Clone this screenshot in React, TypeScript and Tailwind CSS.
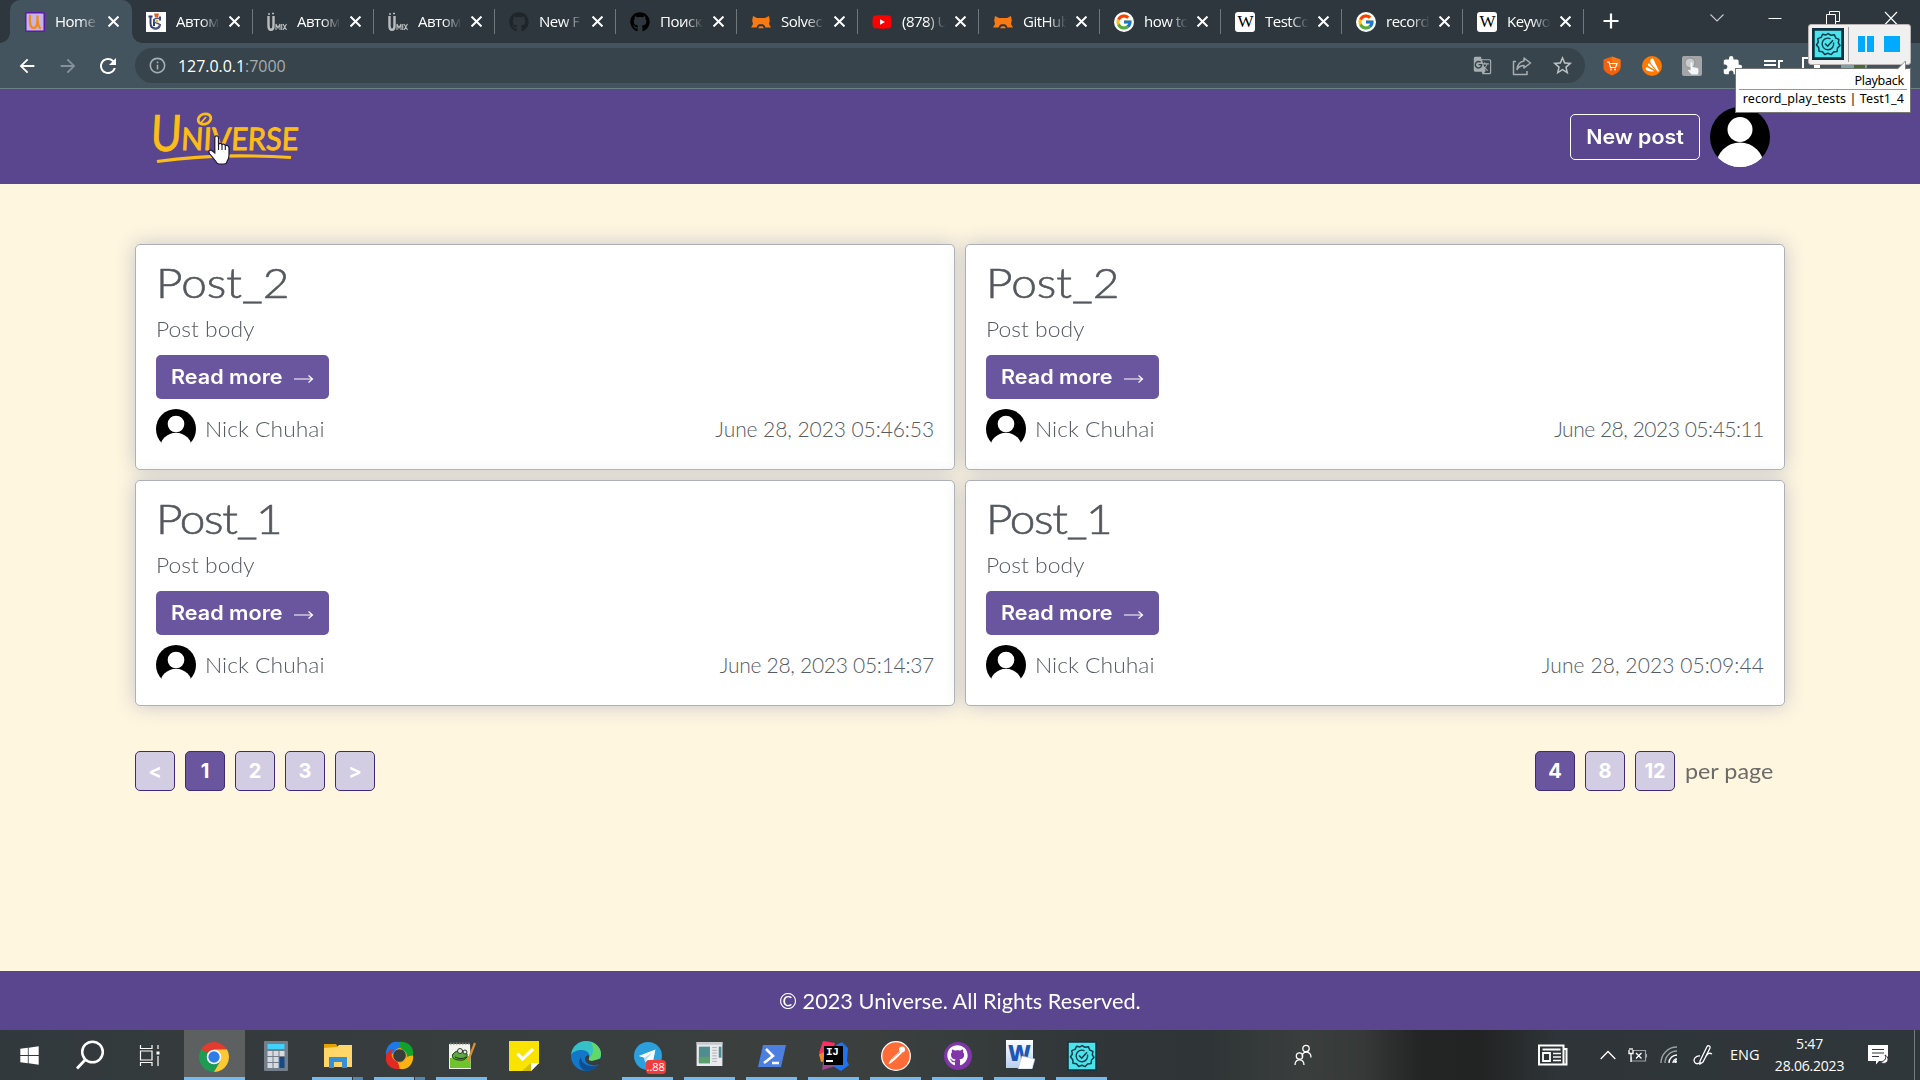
import type { ReactNode } from 'react';
import { FaGithub, FaWindows, FaYoutube } from 'react-icons/fa';
import { FcGoogle } from 'react-icons/fc';
import {
  MdArrowBack,
  MdArrowForward,
  MdExtension,
  MdGTranslate,
  MdInfoOutline,
  MdOutlineStarBorder,
  MdQueueMusic,
  MdRefresh,
} from 'react-icons/md';

/* ---------- favicons ---------- */

const UniverseIcon = () => (
  <svg viewBox="0 0 20 20" className="size-5">
    <rect x=".75" y=".75" width="18.5" height="18.5" rx="1" fill="#c8b4e6" stroke="#5a17a8" strokeWidth="1.5" />
    <path d="M5 3.500c0 5-1 12 3.500 12.500 4 .3 4-6 4-12.500 0 6 .2 10 2.500 12.500" fill="none" stroke="#f08a1c" strokeWidth="2.200" strokeLinecap="round" />
  </svg>
);

const CrestIcon = () => (
  <svg viewBox="0 0 20 20" className="size-5">
    <rect width="20" height="20" fill="#fff" />
    <path d="M2.500 4.500h4M4.500 5v6c0 7 9 7 9.500 1M8 7v7M14 4.500v4" fill="none" stroke="#2e4077" strokeWidth="2" />
    <path d="M15 7c-5-2-8 0-7 2.500s6 1 6 4-4 4-7 3" fill="none" stroke="#4a5a8c" strokeWidth="1.500" />
    <path d="M8 1.500h5l-1 4H9z" fill="#e2622c" />
    <circle cx="11" cy="9" r="1.600" fill="#e9b93c" />
  </svg>
);

const MixIcon = () => (
  <svg viewBox="0 0 20 20" className="size-5">
    <g fill="none" stroke="#b9bdbf">
      <path d="M1.500 4v10c0 5 5 5 5 0V4" strokeWidth="2.400" />
      <path d="M1 2h2M5 1.500h2" strokeWidth="1.500" />
      <path d="M9 18v-6l2 4 2-4v6M14.700 12v6M16 12l3.500 6M19.500 12L16 18" strokeWidth="1.100" />
    </g>
  </svg>
);

const CatIcon = () => (
  <svg viewBox="0 0 20 20" className="size-5">
    <path d="M2 4l4 2h8l4-2 .8 4.500-.8 3.500 2 3.500h-5.500l-1-2-1.500-1.200H8L6.500 13.500l-1 2H0L2 12l-.8-3.500z" fill="#f97a12" />
    <path d="M7 16.200l1.500-2h3l1.500 2z" fill="#f97a12" />
  </svg>
);

const WikiIcon = () => (
  <span className="flex size-5 items-center justify-center rounded-[3px] bg-white font-['Liberation_Serif',serif] text-[17px] leading-none tracking-tighter text-black">W</span>
);

const GoogleIcon = () => (
  <span className="flex size-5 items-center justify-center rounded-full bg-white">
    <FcGoogle size={18} />
  </span>
);

const YouTubeIcon = () => (
  <span className="relative flex size-5 items-center justify-center">
    <span className="absolute h-2 w-2 bg-white" />
    <FaYoutube size={20} className="relative text-[#f00]" />
  </span>
);

const tabs: { title: string; icon: ReactNode }[] = [
  { title: 'Home', icon: <UniverseIcon /> },
  { title: 'Автом', icon: <CrestIcon /> },
  { title: 'Автом', icon: <MixIcon /> },
  { title: 'Автом', icon: <MixIcon /> },
  { title: 'New F', icon: <FaGithub size={20} className="text-[#1f262b]" /> },
  { title: 'Поиск', icon: <FaGithub size={20} className="text-black" /> },
  { title: 'Solvec', icon: <CatIcon /> },
  { title: '(878) U', icon: <YouTubeIcon /> },
  { title: 'GitHub', icon: <CatIcon /> },
  { title: 'how to', icon: <GoogleIcon /> },
  { title: 'TestCo', icon: <WikiIcon /> },
  { title: 'record', icon: <GoogleIcon /> },
  { title: 'Keywo', icon: <WikiIcon /> },
];

const Cross = ({ className }: { className: string }) => (
  <svg viewBox="0 0 10 10" className={className}>
    <path d="M0.500 0.500l9 9M9.500 0.500l-9 9" stroke="currentColor" strokeWidth="1.800" />
  </svg>
);

function TabStrip() {
  return (
    <div className="flex h-[43px] bg-[#2d373d] pl-[10px]">
      {tabs.map((tab, i) => (
        <div
          key={i}
          className={
            i === 0
              ? 'relative flex w-[122px] shrink-0 items-center rounded-t-[10px] bg-[#44545e] pl-[15px]'
              : 'relative flex w-[121px] shrink-0 items-center pl-[14px]'
          }
        >
          {tab.icon}
          <span className="ml-[10px] w-[45px] overflow-hidden text-[15px] tracking-[-0.5px] whitespace-nowrap text-white [mask-image:linear-gradient(to_right,black_55%,transparent_97%)]">
            {tab.title}
          </span>
          <Cross className="ml-[8px] size-[11px] text-white" />
          {i > 0 && <span className="ml-auto h-[25px] w-px bg-[#6d777c]" />}
          {i === 0 && (
            <>
              <span className="absolute bottom-0 -left-[10px] size-[10px] bg-[radial-gradient(circle_at_top_left,transparent_9.5px,#44545e_10px)]" />
              <span className="absolute -right-[10px] bottom-0 size-[10px] bg-[radial-gradient(circle_at_top_right,transparent_9.5px,#44545e_10px)]" />
            </>
          )}
        </div>
      ))}
      <svg viewBox="0 0 16 16" className="mt-[13px] ml-[19px] size-4 shrink-0">
        <path d="M8 .5v15M.5 8h15" stroke="#fff" strokeWidth="2.200" />
      </svg>
      <div className="mt-[11px] ml-auto mr-[22px] flex gap-[44px] text-white">
        <svg viewBox="0 0 14 14" className="size-[14px]"><path d="M.5 3.500l6.500 6.500L13.500 3.500" fill="none" stroke="#c8cdd0" strokeWidth="1.100" /></svg>
        <svg viewBox="0 0 14 14" className="size-[14px]"><path d="M.5 7.500h13" stroke="#fff" /></svg>
        <svg viewBox="0 0 14 14" className="size-[14px]"><path d="M.5 3.500h9v10h-9zM3.500 3V.5h10v10H10" fill="none" stroke="#fff" /></svg>
        <svg viewBox="0 0 14 14" className="size-[14px]"><path d="M1 1l12 12.500M13 1L1 13.500" stroke="#fff" strokeWidth="1.100" /></svg>
      </div>
    </div>
  );
}

function AddressBar() {
  return (
    <div className="flex h-[46px] items-center border-b border-[#6b8081] bg-[#44545e] pl-[16px]">
      <MdArrowBack size={22} className="text-white" />
      <MdArrowForward size={22} className="ml-[19px] text-[#85929a]" />
      <MdRefresh size={24} className="ml-[17px] text-white" />
      <div className="ml-[15px] flex h-[35px] w-[1450px] shrink-0 items-center rounded-full bg-[#38444b] pl-[13px]">
        <MdInfoOutline size={19} className="text-[#a5b0b5]" />
        <span className="ml-[11px] text-base tracking-[-0.05px] text-white">
          127.0.0.1<span className="text-[#a5adb1]">:7000</span>
        </span>
        <MdGTranslate size={19} className="ml-auto text-[#a5adb1]" />
        <svg viewBox="0 0 20 20" className="ml-[20px] size-5">
          <path d="M4 5.500H1.500v13h13.500V15M12 2l6.500 5-6.500 5V9.500C9 9.500 6.500 11 5 13.500 5.500 9 8 5.500 12 5z" fill="none" stroke="#a5adb1" strokeWidth="1.500" strokeLinejoin="round" />
        </svg>
        <MdOutlineStarBorder size={23} className="ml-[19px] mr-[11px] text-[#b9bfc2]" />
      </div>
      <div className="ml-[17px] flex items-center gap-[20px]">
        <svg viewBox="0 0 20 20" className="size-5">
          <path d="M10 .5l8.500 3v8c0 4-4 6-8.500 8-4.500-2-8.500-4-8.500-8v-8z" fill="#f4600c" />
          <path d="M10 .5l8.500 3v8L10 10z" fill="#fb8a1e" opacity=".6" />
          <path d="M5 6h2l1.500 5.500h5L15 7.500H7.500" fill="none" stroke="#fff" strokeWidth="1.200" />
          <circle cx="9" cy="13.500" r=".9" fill="#fff" /><circle cx="13" cy="13.500" r=".9" fill="#fff" />
        </svg>
        <svg viewBox="0 0 20 20" className="size-5">
          <circle cx="10" cy="10" r="10" fill="#ff7800" />
          <path d="M8.500 3.500c1-1.500 2.800-1 3.300.5l5 10.500c.3.800-.3 1.500-1.300 1L9 7.500c-.8-1.500-1-3-.5-4zM6 8c.5-1 1.500-.8 2 0l5.500 6.500L6.500 10C5.800 9.500 5.700 8.700 6 8zM3.700 12.300c.2-1 1.200-1.200 2-.8l6.500 3.700c-2.500.5-5 .3-7.300-.7-.8-.5-1.300-1.200-1.200-2.200z" fill="#fff" />
        </svg>
        <svg viewBox="0 0 20 20" className="size-5">
          <rect width="20" height="20" rx="2" fill="#a3a5a7" />
          <circle cx="8" cy="7" r="5" fill="#c9cacc" stroke="#8d9092" />
          <path d="M8.500 6.500c1.500-1 2 .2 2 1.500v3l5 1c1.500.5 1 3 .5 6.500H9.500L6 14.500c0-1 1.500-1 2.500 0z" fill="#f4f7fa" />
        </svg>
        <MdExtension size={21} className="text-white" />
        <MdQueueMusic size={24} className="-ml-[2px] text-white" />
        <svg viewBox="0 0 18 18" className="-ml-[3px] size-[18px]"><path d="M1 1h16v16H1z" fill="none" stroke="#fff" strokeWidth="2" /><path d="M12 7h6v11h-6z" fill="#fff" /></svg>
        <svg viewBox="0 0 26 26" className="ml-[1px] size-[26px]"><circle cx="13" cy="13" r="13" fill="#7aa5a6" /><path d="M13 12h11v8H13z" fill="#476a37" /><path d="M11 15h4v9h-4z" fill="#d35c3e" /></svg>
      </div>
    </div>
  );
}

/* ---------- page ---------- */

const HeaderLogo = () => (
  <svg viewBox="0 0 150 56" className="h-14 w-[150px]" role="img" aria-label="Universe">
    <g fill="#fcbd16" stroke="#fcbd16" strokeWidth=".9" fontFamily="Lato, sans-serif" fontWeight="400" transform="skewX(-3)">
      <text x="1" y="40.500" fontSize="50" textLength="31" lengthAdjust="spacingAndGlyphs">U</text>
      <text x="32" y="40.500" fontSize="31" textLength="117" lengthAdjust="spacingAndGlyphs">NIVERSE</text>
    </g>
    <ellipse cx="53.500" cy="9" rx="6.500" ry="5" fill="none" stroke="#fcbd16" strokeWidth="2.800" transform="rotate(-20 53.5 9)" />
    <path d="M49 14l6-7" stroke="#fcbd16" strokeWidth="1.800" />
    <path d="M6 51.500C50 45 100 45 140 47.500" fill="none" stroke="#fcbd16" strokeWidth="3.200" />
  </svg>
);

const Avatar = ({ className, clip }: { className: string; clip: string }) => (
  <svg viewBox="0 0 60 60" className={className}>
    <clipPath id={clip}><circle cx="30" cy="30" r="30" /></clipPath>
    <g clipPath={`url(#${clip})`}>
      <rect width="60" height="51" fill="#000" />
      <circle cx="30" cy="22.500" r="12.500" fill="#fff" />
      <circle cx="30" cy="59.500" r="24" fill="#fff" />
      <path d="M0 50.500h60V60H0z" fill="#fff" />
    </g>
  </svg>
);

interface Post {
  title: string;
  titleClass: string;
  date: string;
  dateClass: string;
}

function PostCard({ id, post }: { id: string; post: Post }) {
  return (
    <article className="h-[226px] rounded-[5px] border border-[#adb0b6] bg-white px-5 pt-[13px] shadow-[0_0_20px_#c4c5ca]">
      <h2 className={post.titleClass}>{post.title}</h2>
      <p className="mt-[6px] origin-left scale-x-[1.09] text-[21px] leading-[30px] font-light text-[#565a62]">
        <span className="block w-40">Post body</span>
      </p>
      <a className="mt-[11px] flex h-11 w-[173px] items-center rounded-[5px] bg-[#6a569f] pl-[15px] font-['Inter',sans-serif] text-xl font-semibold text-white">
        <span className="w-[113px] origin-left scale-x-[1.08] whitespace-nowrap">Read more</span>
        <svg viewBox="0 0 20 10" className="mt-[3px] ml-[10px] h-[10px] w-5"><path d="M0 5h18.500M14.500 1.500L18.500 5l-4 3.500" fill="none" stroke="#fff" strokeWidth="1.200" /></svg>
      </a>
      <div className="mt-[10px] flex h-10 items-center text-[21px] font-light text-[#565a62]">
        <Avatar className="size-10" clip={id} />
        <span className="ml-[9px] w-40 origin-left scale-x-[1.09]">Nick Chuhai</span>
        <time className={post.dateClass}>{post.date}</time>
      </div>
    </article>
  );
}

const title2 = 'w-40 origin-left scale-x-[1.12] text-[41px] leading-[50px] font-light text-[#54585e] [-webkit-text-stroke:0.6px_#54585e]';
const title1 = 'w-40 origin-left scale-x-[1.12] text-[41px] leading-[50px] font-light tracking-[-1.2px] text-[#54585e] [-webkit-text-stroke:0.6px_#54585e]';

const posts: Post[] = [
  { title: 'Post_2', titleClass: title2, date: 'June 28, 2023 05:46:53', dateClass: 'ml-auto tracking-[-0.08px]' },
  { title: 'Post_2', titleClass: title2, date: 'June 28, 2023 05:45:11', dateClass: 'ml-auto tracking-[-0.48px]' },
  { title: 'Post_1', titleClass: title1, date: 'June 28, 2023 05:14:37', dateClass: 'ml-auto tracking-[-0.28px]' },
  { title: 'Post_1', titleClass: title1, date: 'June 28, 2023 05:09:44', dateClass: 'ml-auto tracking-[0.08px]' },
];

const PageButton = ({ label, active }: { label: string; active?: boolean }) => (
  <button
    className={
      active
        ? "flex h-10 w-10 items-center justify-center rounded-[5px] border border-[#3e2a75] bg-[#6a569f] font-['Inter',sans-serif] text-xl font-bold text-white"
        : "flex h-10 w-10 items-center justify-center rounded-[5px] border border-[#3e2a75] bg-[#d3cde3] font-['Inter',sans-serif] text-xl font-bold text-white"
    }
  >
    {label}
  </button>
);

function Page() {
  return (
    <div className="flex h-[941px] flex-col bg-[#fff6df] font-['Lato',sans-serif]">
      <header className="flex h-[95px] shrink-0 items-center bg-[#59468f] pr-[150px] pl-[151px]">
        <div className="pt-[3px]">
          <HeaderLogo />
        </div>
        <button className="ml-auto h-[46px] w-[130px] rounded-[5px] border border-white font-['Inter',sans-serif] text-xl font-semibold text-white">
          <span className="block scale-x-[1.07]">New post</span>
        </button>
        <Avatar className="ml-[10px] size-[60px]" clip="me" />
      </header>
      <main className="flex-1 px-[135px] pt-[60px]">
        <div className="grid grid-cols-2 gap-[10px]">
          {posts.map((p, i) => (
            <PostCard key={i} id={`post${i}`} post={p} />
          ))}
        </div>
        <div className="mt-[45px] flex items-center gap-[10px]">
          <PageButton label="<" />
          <PageButton label="1" active />
          <PageButton label="2" />
          <PageButton label="3" />
          <PageButton label=">" />
          <span className="flex-1" />
          <PageButton label="4" active />
          <PageButton label="8" />
          <PageButton label="12" />
          <span className="w-[100px] origin-left scale-x-[1.11] text-[21px] whitespace-nowrap text-[#6c6b6a]">per page</span>
        </div>
      </main>
      <footer className="flex h-[59px] shrink-0 items-center justify-center bg-[#59468f] text-[21px] text-white">
        <span className="scale-x-[1.035]">© 2023 Universe. All Rights Reserved.</span>
      </footer>
    </div>
  );
}

/* ---------- taskbar ---------- */

const GearCheck = ({ className }: { className: string }) => (
  <svg viewBox="0 0 30 30" className={className}>
    <rect x="1" y="1" width="28" height="28" fill="#4be3ec" stroke="#10333f" strokeWidth="1.500" />
    <path d="M15 4.500l3 1.800 3.400-.5 1.300 3.200 3.200 1.400-.6 3.400 1.700 2.700-2.500 2.500-.4 3.500-3.500.5-2.400 2.600-3.200-1.400-3.300 1.300-2.200-2.700-3.500-.6-.2-3.500L3.500 16l1.800-3-.5-3.400 3.300-1.200 1.500-3.200 3.400.8z" fill="none" stroke="#0f3d4a" strokeWidth="1.500" strokeLinejoin="round" />
    <path d="M20.500 13.500a5.800 5.800 0 1 1-3-3.700" fill="none" stroke="#0f3d4a" strokeWidth="1.400" />
    <path d="M12 14.500l2.700 2.700 5.300-6" fill="none" stroke="#0f3d4a" strokeWidth="1.600" />
  </svg>
);

const apps: { line?: 'one' | 'many'; active?: boolean; icon: ReactNode }[] = [
  {
    active: true,
    icon: (
      <svg viewBox="0 0 32 32" className="size-8">
        <path d="M16 16L3.010 8.500A15 15 0 0 1 28.990 8.500z" fill="#e33b2e" />
        <path d="M16 16l12.990-7.500A15 15 0 0 1 16 31z" fill="#fcc934" />
        <path d="M16 16v15A15 15 0 0 1 3.010 8.500z" fill="#1e9b52" />
        <path d="M16 8.500h13l-6.500 11.300z" fill="#fcc934" />
        <path d="M9.500 19.800L3 8.500l8 3z" fill="#1e9b52" />
        <path d="M22.500 19.800L16 31l-3-8z" fill="#1e9b52" />
        <path d="M3 8.500L16 8.600 10 12z" fill="#e33b2e" />
        <circle cx="16" cy="16" r="7.300" fill="#fff" /><circle cx="16" cy="16" r="5.700" fill="#2f7de8" />
      </svg>
    ),
  },
  {
    icon: (
      <svg viewBox="0 0 24 30" className="h-[30px] w-6">
        <rect width="24" height="30" rx="1" fill="#737e8a" /><rect x="3.500" y="3" width="17" height="5" fill="#3fd2ff" />
        <g fill="#d6dbe0"><path d="M3.500 10h5v5h-5zM9.500 10h5v5h-5zM15.500 10h5v5h-5zM3.500 16h5v5h-5zM9.500 16h5v5h-5zM3.500 22h5v5h-5zM9.500 22h5v5h-5z" /></g>
        <path d="M15.500 16h5v11h-5z" fill="#154a87" />
      </svg>
    ),
  },
  {
    line: 'many',
    icon: (
      <svg viewBox="0 0 30 26" className="h-[26px] w-[30px]">
        <path d="M1 1h12l2 3h14v5H1z" fill="#e5a100" /><path d="M1 5l13-1 2-2h13v22H1z" fill="#ffd667" />
        <path d="M6 25V14h18v11h-5v-6h-8v6z" fill="#3590da" />
      </svg>
    ),
  },
  {
    line: 'many',
    icon: (
      <svg viewBox="0 0 32 32" className="size-[31px]">
        <circle cx="16" cy="16" r="10" fill="none" stroke="#e3a01c" strokeWidth="7" />
        <path d="M2 16C1 8 7 1 14 2c5 0 8 3 9 8-5-4-11-2-13 3-2 2-5 3-8 3z" fill="#1c7ae8" />
        <path d="M16 2c8-1 15 5 14 12 0 5-3 8-8 9 4-5 2-11-3-13-2-2-3-5-3-8z" fill="#12a12a" />
        <path d="M30 16c1 8-5 15-12 14-5 0-8-3-9-8 5 4 11 2 13-3 2-2 5-3 8-3z" fill="#f9b313" />
        <path d="M16 30C8 31 1 25 2 18c0-5 3-8 8-9-4 5-2 11 3 13 2 2 3 5 3 8z" fill="#e32a22" />
      </svg>
    ),
  },
  {
    line: 'one',
    icon: (
      <svg viewBox="0 0 30 30" className="size-[30px]">
        <path d="M2 3h21l1 25H2z" fill="#f2f4ee" /><path d="M3 17l20-2 1 12H3z" fill="#6fc42d" />
        <path d="M3 2.500h20" stroke="#777" strokeWidth="2" strokeDasharray="1.500 1.500" />
        <path d="M6 13c4-5 12-4 14 0 1 4-3 7-8 6-5 0-8-3-6-6z" fill="#5da843" stroke="#20351a" />
        <circle cx="13" cy="10" r="2.500" fill="#dff0d8" stroke="#333" /><circle cx="18" cy="11" r="2" fill="#dff0d8" stroke="#333" />
        <path d="M8 16c4 2 8 2 11 0" stroke="#222" fill="none" /><path d="M28 2l-7 18" stroke="#e0902b" strokeWidth="2.200" />
      </svg>
    ),
  },
  {
    icon: (
      <svg viewBox="0 0 30 30" className="size-[30px]">
        <path d="M0 0h30v22l-8 8H0z" fill="#f9e300" /><path d="M13 30l9-8v8z" fill="#d3be00" /><path d="M22 30v-8h8z" fill="#fff" />
        <path d="M8.500 12.500l5 5.500L24 8" fill="none" stroke="#fff" strokeWidth="3.200" />
      </svg>
    ),
  },
  {
    icon: (
      <svg viewBox="0 0 30 30" className="size-[30px]">
        <circle cx="15" cy="15" r="15" fill="#1277c8" />
        <path d="M0 14C1 5 8 0 15 0c9 0 15 6 15 13 0 5-4 7-9 7-3 0-4-1-3-3 2-4-2-8-7-8C6 9 1 11 0 14z" fill="#35c1c5" />
        <path d="M20 1c6 2 10 7 10 12 0 5-4 7-9 7-3 0-4-1-3-3 5-3 5-10 2-16z" fill="#63d865" />
        <path d="M10 16c0 6 6 11 17 8-3 4-7 6-12 6-6-2-9-9-5-14z" fill="#0e4f94" />
        <path d="M18 17c-1 2 0 3 3 3l9-2.500v5l-3 1c-6 2-12-.5-13-5 0-3 2-5 4-4z" fill="#373c3e" />
      </svg>
    ),
  },
  {
    line: 'one',
    icon: (
      <span className="relative">
        <svg viewBox="0 0 30 30" className="size-7"><circle cx="15" cy="15" r="15" fill="#2ba0dc" /><path d="M5 15l18-7-3 15-5-4-3 3-1-5z" fill="#fff" /><path d="M11 17l9-6-6 7-2 4z" fill="#b7dff3" /></svg>
        <span className="absolute top-[18px] left-[12px] rounded-[4px] bg-[#ee3e3b] px-px text-[11px] leading-[14px] text-white">..88</span>
      </span>
    ),
  },
  {
    line: 'one',
    icon: (
      <svg viewBox="0 0 28 26" className="mb-1 h-6 w-[27px]">
        <path d="M0 0h28v26H0z" fill="#e8eaec" /><path d="M0 0h28v3H0z" fill="#c6cacf" /><path d="M2.500 5h12v18h-12z" fill="#4f8c90" /><path d="M2.500 16h12v7h-12z" fill="#5ba06c" />
        <path d="M17 6h5M17 9h5M17 12h5M17 15h5M17 18h5M17 21h5" stroke="#a9adb2" /><path d="M24 5h3v12h-3z" fill="#4f8c90" />
      </svg>
    ),
  },
  {
    line: 'one',
    icon: (
      <svg viewBox="0 0 30 24" className="h-6 w-[30px]"><path d="M6 1h23l-5 22H1z" fill="#4d7fe0" /><path d="M9 5l7 7-9 7M15 19h7" fill="none" stroke="#fff" strokeWidth="2.600" /></svg>
    ),
  },
  {
    line: 'one',
    icon: (
      <span className="relative flex size-[30px] items-center justify-center">
        <svg viewBox="0 0 30 30" className="absolute size-[30px]"><path d="M4 0l12 2-4 14L0 12z" fill="#fe2d63" /><path d="M0 13l8-3v10l-6 1z" fill="#f08a2c" /><path d="M3 29l2-14 12 10z" fill="#a0488f" /><path d="M17 4l6-3 6 6-1 13 2 4-8 6-8-5z" fill="#1e74f0" /></svg>
        <span className="relative flex size-[19px] flex-col bg-black pl-[2px] font-['Liberation_Mono',monospace] text-[11px] leading-[12px] font-bold tracking-tight text-white">
          IJ
          <span className="mt-[2px] h-[1.5px] w-[7px] bg-white" />
        </span>
      </span>
    ),
  },
  {
    line: 'one',
    icon: (
      <svg viewBox="0 0 30 30" className="size-[30px]"><circle cx="15" cy="15" r="14.300" fill="#ff6c37" stroke="#fff" strokeWidth="1.300" /><circle cx="21" cy="8.500" r="3" fill="#fff" /><path d="M19 10l2.200 1.800-7.200 7L8.500 23l-1-.5L11 17z" fill="#fff" /><path d="M11 18l8-7" stroke="#ff6c37" strokeWidth=".7" /></svg>
    ),
  },
  {
    line: 'one',
    icon: (
      <span className="flex size-7 items-center justify-center rounded-full bg-[#8035a8]"><FaGithub size={21} className="text-white" /></span>
    ),
  },
  {
    line: 'one',
    icon: (
      <span className="relative mb-[3px] flex h-7 w-[27px] items-start justify-center bg-[linear-gradient(to_bottom,#ffffff,#b9d0f0)] font-['Open_Sans',sans-serif] text-[22px] leading-[24px] font-extrabold text-[#1d56b4]">
        W
        <svg viewBox="0 0 18 14" className="absolute -right-[2px] -bottom-[1px] h-[14px] w-[18px]"><path d="M1 14L5 1l13 3-3 10z" fill="#fff" stroke="#a9bfe0" strokeWidth=".6" /></svg>
      </span>
    ),
  },
  { line: 'one', icon: <GearCheck className="size-[30px]" /> },
];

function Taskbar() {
  return (
    <div className="flex h-[50px] items-stretch bg-[linear-gradient(to_right,#32393c_0%,#383d3e_25%,#3b403f_45%,#303638_58%,#2f3536_63%,#3a3e3d_68%,#363938_71%,#232424_74%,#222323_77%,#2e3437_81%,#30373a_100%)] text-white">
      <div className="flex w-[184px] items-center">
        <FaWindows size={21} className="ml-[19px]" />
        <svg viewBox="0 0 30 30" className="ml-[35px] size-[30px]"><circle cx="17.500" cy="12" r="10.300" fill="none" stroke="#fff" strokeWidth="2.500" /><path d="M10.500 19.500L2 28.500" stroke="#fff" strokeWidth="2.800" /></svg>
        <svg viewBox="0 0 20 21" className="ml-[34px] size-[21px]" fill="none" stroke="#fff" strokeWidth="1.200"><path d="M1 0v3.500h11.500V0M1 21v-3.500h11.500V21M1 6h11.500v9H1zM18.500 0v4M18.500 11v10" /><path d="M17 6.500h3v3h-3z" fill="#fff" stroke="none" /></svg>
      </div>
      {apps.map((app, i) => (
        <div
          key={i}
          className={
            app.active
              ? 'relative flex w-[61px] items-center justify-center bg-[#5c6061] pt-[3px] pr-[2px]'
              : 'relative ml-px flex w-[61px] items-center justify-center pt-[1px] pr-[2px]'
          }
        >
          {app.icon}
          {app.active && <span className="absolute bottom-0 left-0 h-[3px] w-full bg-[#76b9ed]" />}
          {app.line === 'one' && <span className="absolute bottom-0 left-[4px] h-[3px] w-[51px] bg-[#76b9ed]" />}
          {app.line === 'many' && (
            <span className="absolute bottom-0 left-[4px] flex h-[3px] w-[51px] bg-[#5487ad]">
              <span className="w-[41px] border-r border-[#33383a] bg-[#76b9ed]" />
            </span>
          )}
        </div>
      ))}
      <div className="flex flex-1 items-center">
        <svg viewBox="0 0 20 22" className="ml-[180px] h-[22px] w-5" fill="none" stroke="#fff" strokeWidth="1.300"><circle cx="13" cy="4.500" r="3.200" /><path d="M9 12.500c0-6 9-6 9 1" /><circle cx="6.500" cy="12" r="3.200" /><path d="M2 21c0-7 9-7 9 0" /></svg>
        <svg viewBox="0 0 30 22" className="ml-[225px] h-[22px] w-[30px]"><path d="M1 1.500h24.500v19H1zM25.500 5h3v15.500h-4" fill="none" stroke="#fff" strokeWidth="2" /><path d="M4.500 5.500h18" stroke="#fff" strokeWidth="2" /><path d="M5 9h7v8H5z" fill="none" stroke="#fff" strokeWidth="1.800" /><path d="M15 9.500h8M15 13h8M15 16.500h8" stroke="#fff" strokeWidth="1.600" /></svg>
        <svg viewBox="0 0 16 10" className="ml-[32px] h-[10px] w-4"><path d="M.7 9L8 1.500 15.300 9" fill="none" stroke="#fff" strokeWidth="1.300" /></svg>
        <svg viewBox="0 0 20 15" className="ml-[12px] h-[15px] w-5" fill="none"><path d="M5 2.500h12.500v10.500H3.500V9M18.500 6v3.500" stroke="#9da2a4" strokeWidth="1.200" /><path d="M1 2v3.500h4V2M2 0v2M4 0v2M3 6v8M8 5l5.500 5.500M13.500 5L8 10.500" stroke="#fff" strokeWidth="1.300" /></svg>
        <svg viewBox="0 0 18 18" className="ml-[12px] size-[18px]" fill="none" strokeWidth="1.400"><path d="M1 17A16 16 0 0 1 17 1M5 17A12 12 0 0 1 17 5" stroke="#9da2a4" /><path d="M9 17a8 8 0 0 1 8-8M13 17a4 4 0 0 1 4-4" stroke="#fff" /><circle cx="15.500" cy="15.500" r="1.500" fill="#fff" /></svg>
        <svg viewBox="0 0 20 20" className="ml-[15px] size-5" fill="none" stroke="#fff" strokeWidth="1.300"><path d="M7 16L14 1.500c1-1.500 3.500-.5 3 1.500L10 17l-3 2zM7 11c-4-.5-7 3-5.500 6 1 2.500 4 2 5.500.5M12 13c2-4 4-6 7-4" /></svg>
        <span className="ml-[17px] text-[14.500px]">ENG</span>
        <div className="ml-[14px] flex w-[72px] flex-col items-center text-[14px] leading-[22.500px] tracking-[-0.2px]">
          <span>5:47</span>
          <span>28.06.2023</span>
        </div>
        <svg viewBox="0 0 22 20" className="ml-[22px] h-5 w-[22px]"><path d="M0 0h20v16h-9l-3 3.500V16H0z" fill="#fff" /><path d="M4 4.500h12M4 8h12M4 11.500h7" stroke="#30373a" strokeWidth="1.200" /><path d="M17 10c2 4-1 7-5 6.500 2 3 8 2.500 8-2 0-2-1-3.500-3-4.500z" fill="#fff" stroke="#30373a" /></svg>
        <span className="mr-[5px] ml-auto h-[50px] w-px bg-[#74797b]" />
      </div>
    </div>
  );
}

/* ---------- floating items ---------- */

function RecorderOverlay() {
  return (
    <>
      <div className="absolute top-[24px] left-[1808px] flex h-[41px] w-[103px] items-center rounded-[3px] border border-[#b9b3b3] bg-[#f0f0f0] pb-px pl-[3px]">
        <span className="flex size-8 items-center justify-center bg-[#10333f]"><GearCheck className="size-[30px]" /></span>
        <span className="ml-[4px] h-[35px] w-px bg-[#a0a0a0]" />
        <span className="ml-[9px] h-4 w-[7px] bg-[#00aaff]" />
        <span className="ml-[2px] h-4 w-[7px] bg-[#00aaff]" />
        <span className="ml-[10px] size-4 bg-[#00aaff]" />
      </div>
      <div className="absolute top-[68px] left-[1735px] flex h-[45px] w-[176px] flex-col border border-[#767676] bg-white px-[3px] font-['Noto_Sans',sans-serif] text-[12.5px] text-black">
        <span className="h-[21px] border-b border-[#8f96a8] pr-[3px] text-right leading-[23px] tracking-[-0.25px]">Playback</span>
        <span className="pr-[3px] text-right leading-[18px] tracking-[0.1px] whitespace-nowrap">record_play_tests | Test1_4</span>
      </div>
      <svg viewBox="0 0 9 9" className="absolute top-[61px] left-[1897px] size-[9px]"><path d="M0 8.500L8.500 0v8.500" fill="#fff" stroke="#767676" strokeWidth=".8" /></svg>
    </>
  );
}

const HandPointer = () => (
  <svg viewBox="0 0 22 30" className="absolute top-[135px] left-[208px] h-[30px] w-[22px]">
    <path d="M6.800 2.500c0-2.200 3.700-2.200 3.700 0V9c1-1 3-.8 3.400.5 1.200-.7 3-.2 3.400 1 1.700-.5 3.700.3 3.700 2.500v7c0 4-1.500 5-2 6.500-.2 1.500-1 2.500-3 2.500h-5c-2 0-2.500-1-3.500-3L1.500 18.500C-.3 15.500 2.500 14 4.500 16l2.300 2z" fill="#fff" stroke="#1a1633" strokeWidth="1.200" />
    <path d="M10.500 9v6M14 9.500V15M17.300 10.500V15" stroke="#1a1633" strokeWidth="1.100" />
  </svg>
);

export default function App() {
  return (
    <div className="relative h-[1080px] w-[1920px] overflow-hidden font-['Open_Sans','Noto_Sans',sans-serif]">
      <TabStrip />
      <AddressBar />
      <Page />
      <Taskbar />
      <RecorderOverlay />
      <HandPointer />
    </div>
  );
}
